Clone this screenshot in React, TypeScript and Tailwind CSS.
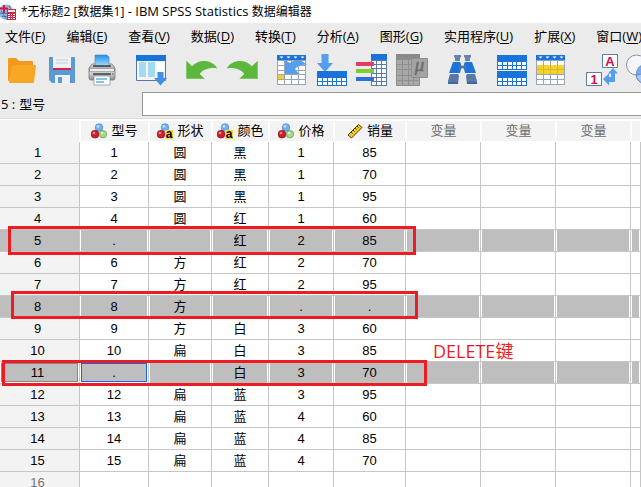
import type { ReactNode } from "react";

const BLUE = "#1a73d9";
const SKY = "#559eee";

function Icon({ children }: { children: ReactNode }) {
  return (
    <svg viewBox="0 0 32 32" className="block size-8" aria-hidden="true">
      {children}
    </svg>
  );
}

type GridProps = {
  x: number;
  y: number;
  w: number;
  h: number;
  head: number;
  cols: number;
  rows: number;
  line: string;
  headColor?: string;
  fill?: string;
};

function Sheet({ x, y, w, h, head, cols, rows, line, headColor = BLUE, fill = "#fff" }: GridProps) {
  const cw = (w - 1) / cols;
  const rh = (h - head - 1) / rows;
  return (
    <g shapeRendering="crispEdges">
      <rect x={x} y={y} width={w} height={h} fill={fill} />
      {Array.from({ length: cols + 1 }, (_, i) => (
        <rect key={"c" + i} x={Math.round(x + i * cw)} y={y + head} width="1" height={h - head} fill={line} />
      ))}
      {Array.from({ length: rows + 1 }, (_, i) => (
        <rect key={"r" + i} x={x} y={Math.round(y + head + i * rh)} width={w} height="1" fill={line} />
      ))}
      <rect x={x} y={y} width={w} height={head} fill={headColor} />
    </g>
  );
}

function FilterMarks() {
  return <path d="M2.500 2.500h4l-2 2zM9.500 2.500h4l-2 2zM16.500 2.500h4l-2 2zM23.500 2.500h4l-2 2z" fill="#fff" />;
}

const OpenIcon = () => (
  <Icon>
    <path d="M2 5q0-1 1-1h7l3 3h13q1 0 1 1v4H8L3 27H2z" fill="#f3991d" />
    <path d="M7 11h22q1 0 1 1l-2 16q0 1-1 1H4q-1 0-1-1l3-16q0-1 1-1z" fill="#f8a725" />
  </Icon>
);

const SaveIcon = () => (
  <Icon>
    <path d="M3 3h26v26H6l-3-3z" fill="#5b9ad2" />
    <path d="M7 3h18v12H7z" fill="#eef1f4" />
    <path d="M10 6h12M10 9h12" stroke="#c3ccd6" />
    <path d="M7 14h18v2H7z" fill="#d32348" />
    <path d="M9 21h15v8H9z" fill="#eef1f4" />
    <path d="M12 23h4v6h-4z" fill="#5b9ad2" />
  </Icon>
);

const PrintIcon = () => (
  <Icon>
    <defs>
      <linearGradient id="sheet" x1="0" y1="0" x2="0" y2="1">
        <stop offset="0" stopColor="#2490e6" />
        <stop offset="1" stopColor="#a6dcfb" />
      </linearGradient>
      <linearGradient id="body" x1="0" y1="0" x2="0" y2="1">
        <stop offset="0" stopColor="#e4e4e4" />
        <stop offset="0.400" stopColor="#8b8b8b" />
        <stop offset="0.550" stopColor="#d8d8d8" />
        <stop offset="1" stopColor="#8a8a8a" />
      </linearGradient>
    </defs>
    <path d="M6 10h20l3 4v10q0 2-2 2H5q-2 0-2-2V14z" fill="url(#body)" stroke="#777" strokeWidth="0.800" />
    <path d="M9 1h12l2 2v9H9z" fill="url(#sheet)" stroke="#3d86c0" strokeWidth="0.600" />
    <path d="M7 12h18M7 20h18" stroke="#3e3e3e" strokeWidth="1.500" />
    <path d="M4 15h24v2H4z" fill="#efefef" />
    <path d="M8 22h16v9H8z" fill="#fff" stroke="#7a8ba0" strokeWidth="0.700" />
    <path d="M10 24h11v2H10zM10 27h8v2h-8z" fill="#8cc0e8" />
    <circle cx="27" cy="20" r="1" fill="#4cb53a" />
  </Icon>
);

const RecallIcon = () => (
  <Icon>
    <path d="M0.500 1.500h29v25h-29z" fill="#f5f5f5" stroke="#56779f" />
    <path d="M0 1h30v6H0z" fill={BLUE} />
    <path d="M3 8h7v15H3zM12 8h7v15h-7z" fill="#a1daf2" />
    <path d="M21 8h7v10h-7z" fill="#fff" />
    <path d="M21.500 18h6v6h3.500l-6.500 7.500-6.500-7.500h3.500z" fill="#438ee6" />
  </Icon>
);

const UNDO_PATH = "M0.300 6.700v18h18.400l-5-4.700C16.500 16 23 13 31.300 14.500C26.500 5.500 13 4.500 6 12.300z";

const UndoIcon = () => (
  <Icon>
    <path d={UNDO_PATH} fill="#5cb83c" />
  </Icon>
);

const RedoIcon = () => (
  <Icon>
    <path d={UNDO_PATH} fill="#5cb83c" transform="matrix(-1 0 0 1 32 0)" />
  </Icon>
);

const GotoCaseIcon = () => (
  <Icon>
    <g transform="translate(1 0)">
      <Sheet x={0} y={1} w={29} h={30} head={5} cols={4} rows={5} line="#98a4b8" />
      <FilterMarks />
      <path d="M1 21h6v4H1z" fill="#f3cd2c" />
      <path d="M8 6v14h14l-4-5c3-4 8-5 12-4C25 5 18 5 13 9z" fill={SKY} />
    </g>
  </Icon>
);

const InsertCasesIcon = () => (
  <Icon>
    <path d="M5.500 0h7v9H17l-8 9-8-9h4.500z" fill={SKY} />
    <Sheet x={1} y={17} w={30} h={15} head={6} cols={6} rows={2} line={BLUE} />
  </Icon>
);

const InsertVariableIcon = () => (
  <Icon>
    <Sheet x={15} y={0} w={16} h={32} head={6} cols={3} rows={6} line="#5a7aa8" />
    <path d="M0 8h18v4H0z" fill="#e03c66" />
    <path d="M0 15h18v4H0z" fill="#7ccc32" />
    <path d="M0 23h18v4H0z" fill="#2c6fdc" />
  </Icon>
);

const StatisticsIcon = () => (
  <Icon>
    <Sheet x={0} y={0} w={24} h={32} head={5} cols={4} rows={5} line="#8e8e8e" headColor="#8a8a8a" fill="#a8a8a8" />
    <path d="M15.500 4.500h16v19h-16z" fill="#a4a4a4" stroke="#8e8e8e" />
    <text x="23.500" y="17" textAnchor="middle" fontSize="19" fontStyle="italic" fontFamily="Liberation Serif, serif" fill="#6c6c6c" stroke="#6c6c6c" strokeWidth="0.500">
      μ
    </text>
  </Icon>
);

const FindIcon = () => (
  <Icon>
    <path d="M8 1h7v2l-1 1v3H9V4L8 3zM18 1h7v2l-1 1v3h-5V4l-1-1z" fill="#6685ae" />
    <path d="M7 8h7l1 2v5l-1 4H3z" fill={BLUE} />
    <path d="M19 8h7l4 11H19l-1-4v-5z" fill={BLUE} />
    <path d="M13 10l3.500 2L20 10v6l-3.500-2L13 16z" fill="#5373a3" />
    <path d="M4 20h8l1 2-1 8H2v-3zM21 20h8l2 7v3H21l-1-8z" fill="#5878a7" />
    <path d="M2 28h10v2H2zM21 28h10v2H21z" fill="#3f679f" />
  </Icon>
);

const SplitIcon = () => (
  <Icon>
    <Sheet x={1} y={1} w={30} h={15} head={6} cols={6} rows={2} line={BLUE} />
    <Sheet x={1} y={17} w={30} h={15} head={6} cols={6} rows={2} line={BLUE} />
  </Icon>
);

const SelectCasesIcon = () => (
  <Icon>
    <Sheet x={0} y={1} w={29} h={30} head={5} cols={4} rows={5} line="#98a4b8" />
    <FilterMarks />
    <path d="M1 11h27v9H1z" fill="#f5d32e" />
    <path d="M1 15.500h27M7.500 11v9M14.500 11v9M21.500 11v9" stroke="#d9b52a" />
  </Icon>
);

const ValueLabelsIcon = () => (
  <Icon>
    <path d="M16.500 0.500h15v13h-15zM0.500 18.500h15v13h-15z" fill="#fff" stroke="#5b7ba8" />
    <g fontFamily="Liberation Sans, sans-serif" fontWeight="700" fontSize="13" fill="#d9094f" textAnchor="middle">
      <text x="24" y="11.500">A</text>
      <text x="8" y="29.500">1</text>
    </g>
    <path d="M17 25l6-5.500V23h2v-3.500h-3l5-5.500 5 5.500h-3V28h-6v3.500z" fill={SKY} />
  </Icon>
);

const VariableSetsIcon = () => (
  <Icon>
    <circle cx="20" cy="20" r="10" fill="#a9c8f5" stroke="#5a7fbb" />
    <circle cx="10.500" cy="11" r="10" fill="#f4f6fa" stroke="#8493aa" />
    <path d="M10.200 20.900A10 10 0 0 1 20.400 10A10 10 0 0 1 10.200 20.900z" fill="#7aa8ef" stroke="#5a7fbb" strokeWidth="0.600" />
  </Icon>
);

function AppLogo() {
  return (
    <svg viewBox="0 0 16 16" className="block size-4 shrink-0" aria-hidden="true">
      <circle cx="6" cy="8" r="7.500" fill="#8cb6dd" />
      <path d="M0 9.500h13M9 1q4 7 0 14M2 12.500h9M1 7q5 7 6 9" stroke="#3c6fae" strokeWidth="0.800" fill="none" />
      <path d="M0 3.500h3V1h2v2.500h3v2H5V9H3V5.500H0z" fill="#d9143d" />
      <rect x="7" y="5" width="9" height="11" fill="#c62c48" />
      <path d="M8 6h7v2H8z" fill="#f5dfe3" />
      <path d="M8 10h2v1H8zM11 10h1v1h-1zM13 10h2v1h-2zM8 12h2v1H8zM11 12h1v1h-1zM13 12h2v1h-2zM8 14h2v1H8zM11 14h1v1h-1zM13 14h2v1h-2z" fill="#fff" />
    </svg>
  );
}

function NominalIcon({ text = false }: { text?: boolean }) {
  return (
    <svg viewBox="0 0 16 16" className="block size-4 shrink-0" aria-hidden="true">
      <circle cx="8" cy="4.500" r="3.800" fill="#6fb0f0" stroke="#3f7cc0" strokeWidth="0.600" />
      <circle cx="7" cy="3.300" r="1.400" fill="#c4e0fb" />
      <circle cx="4" cy="11.200" r="3.900" fill="#cf1f2c" stroke="#8a0e18" strokeWidth="0.600" />
      <circle cx="3" cy="10" r="1.300" fill="#f08a8f" />
      {text ? (
        <>
          <rect x="8" y="7" width="8" height="9" fill="#ffd52e" />
          <text x="12" y="14.500" textAnchor="middle" fontSize="12" fontWeight="700" fontFamily="Liberation Sans, sans-serif" fill="#000">
            a
          </text>
        </>
      ) : (
        <>
          <circle cx="12" cy="11.200" r="3.700" fill="#a5d88a" stroke="#4f8f3c" strokeWidth="0.600" />
          <circle cx="11" cy="10" r="1.300" fill="#dcf3cf" />
        </>
      )}
    </svg>
  );
}

function ScaleIcon() {
  return (
    <svg viewBox="0 0 16 16" className="block size-4 shrink-0" aria-hidden="true">
      <path d="M1 12L11.500 1.500l3.500 3L4.500 15z" fill="#f6c52c" stroke="#4c3c10" />
      <path d="M4 9l1.500 1.500M6 7l1.500 1.500M8 5l1.500 1.500M10 3l1.500 1.500" stroke="#4c3c10" />
    </svg>
  );
}

const menus: [string, string][] = [
  ["文件", "F"],
  ["编辑", "E"],
  ["查看", "V"],
  ["数据", "D"],
  ["转换", "T"],
  ["分析", "A"],
  ["图形", "G"],
  ["实用程序", "U"],
  ["扩展", "X"],
  ["窗口", "W"],
];

const toolGroups: [string, () => ReactNode][][] = [
  [["打开", OpenIcon], ["保存", SaveIcon], ["打印", PrintIcon]],
  [["重新调用对话框", RecallIcon]],
  [["撤销", UndoIcon], ["重做", RedoIcon]],
  [["转到个案", GotoCaseIcon], ["插入个案", InsertCasesIcon], ["插入变量", InsertVariableIcon], ["统计", StatisticsIcon]],
  [["查找", FindIcon]],
  [["拆分文件", SplitIcon], ["选择个案", SelectCasesIcon]],
  [["值标签", ValueLabelsIcon], ["变量集", VariableSetsIcon]],
];

const columns: { name: string; icon?: ReactNode; width: string }[] = [
  { name: "型号", icon: <NominalIcon />, width: "w-[69px]" },
  { name: "形状", icon: <NominalIcon text />, width: "w-[63px]" },
  { name: "颜色", icon: <NominalIcon text />, width: "w-[57px]" },
  { name: "价格", icon: <NominalIcon />, width: "w-[65px]" },
  { name: "销量", icon: <ScaleIcon />, width: "w-[72px]" },
  { name: "变量", width: "w-[75px]" },
  { name: "变量", width: "w-[75px]" },
  { name: "变量", width: "w-[75px]" },
  { name: "", width: "w-auto" },
];

const rows: string[][] = [
  ["1", "圆", "黑", "1", "85"],
  ["2", "圆", "黑", "1", "70"],
  ["3", "圆", "黑", "1", "95"],
  ["4", "圆", "红", "1", "60"],
  [".", "", "红", "2", "85"],
  ["6", "方", "红", "2", "70"],
  ["7", "方", "红", "2", "95"],
  ["8", "方", "", ".", "."],
  ["9", "方", "白", "3", "60"],
  ["10", "扁", "白", "3", "85"],
  [".", "", "白", "3", "70"],
  ["12", "扁", "蓝", "3", "95"],
  ["13", "扁", "蓝", "4", "60"],
  ["14", "扁", "蓝", "4", "85"],
  ["15", "扁", "蓝", "4", "70"],
  [],
];

const selectedRows = [5, 8, 11];
const activeRow = 11;

function cellStyle(row: number, col: number) {
  if (row === activeRow && col === 0) {
    return "bg-[#bebebe] shadow-[inset_0_0_0_1px_#fff,inset_0_0_0_2px_#1565e8]";
  }
  if (selectedRows.includes(row)) {
    return "bg-[#bebebe] shadow-[inset_1px_0_0_#fff,inset_-1px_0_0_#fff]";
  }
  return "bg-white";
}

function rowHeadStyle(row: number) {
  if (row === activeRow) return "bg-[#bebebe] text-black shadow-[inset_0_0_0_1px_#fff,inset_0_0_0_2px_#858585]";
  if (selectedRows.includes(row)) return "bg-[#bebebe] text-black";
  return row > 15 ? "bg-[#f3f3f3] text-[#777]" : "bg-[#f3f3f3] text-black";
}

export default function App() {
  return (
    <div className="flex h-screen flex-col overflow-hidden bg-[#ebebeb] font-['Open_Sans','Noto_Sans_CJK_SC',sans-serif] text-black">
      <header className="flex h-[23px] shrink-0 items-center gap-[5px] bg-white">
        <AppLogo />
        <h1 className="text-[12px] leading-4 whitespace-nowrap">
          *无标题2 [数据集1]<span className="text-[13px]"> - IBM SPSS Statistics </span>数据编辑器
        </h1>
      </header>

      <nav className="flex h-[27px] shrink-0 items-center gap-[21px] pb-[2px] pl-[5px]">
        {menus.map(([label, key]) => (
          <button key={key} type="button" className="shrink-0 text-[13px] leading-5 whitespace-nowrap">
            {label}(<span className="underline underline-offset-2">{key}</span>)
          </button>
        ))}
      </nav>

      <div className="flex h-10 shrink-0 items-center gap-[18px] pl-[6px]" role="toolbar">
        {toolGroups.map((group, i) => (
          <div key={i} className="flex shrink-0 gap-2">
            {group.map(([label, Glyph]) => (
              <button key={label} type="button" aria-label={label}>
                <Glyph />
              </button>
            ))}
          </div>
        ))}
      </div>

      <div className="flex shrink-0 items-center border-b border-[#dadada] py-[2px]">
        <label htmlFor="cell-value" className="flex w-[142px] shrink-0 gap-1 pl-px text-[13px] leading-4">
          <span>5 :</span>
          <span>型号</span>
        </label>
        <input id="cell-value" type="text" className="h-6 min-w-0 flex-1 border border-r-0 border-[#999] bg-white px-1 text-[12px] outline-none" />
      </div>

      <main className="relative flex-1 overflow-hidden bg-white">
        <table className="w-full table-fixed border-separate border-spacing-0 font-['Liberation_Sans','Noto_Sans_CJK_SC',sans-serif] text-[13px] leading-4">
          <colgroup>
            <col className="w-[80px]" />
            {columns.map((c, i) => (
              <col key={i} className={c.width} />
            ))}
          </colgroup>
          <thead>
            <tr className="h-[23px]">
              <td className="border-t border-r border-t-white border-r-white bg-[#f3f3f3] p-0" />
              {columns.map((c, i) => (
                <th key={i} className="overflow-hidden border-t-2 border-r border-b border-l border-white bg-[#f3f3f3] p-0 font-normal">
                  <span className={"flex items-center justify-center gap-1 " + (c.icon ? "text-black" : "text-[#6b6b6b]")}>
                    {c.icon}
                    {c.name}
                  </span>
                </th>
              ))}
            </tr>
          </thead>
          <tbody>
            {rows.map((cells, r) => (
              <tr key={r} className="h-[22px]">
                <th className={"border-r border-b border-[#c6c6c6] py-0 pr-1 pl-0 text-center font-normal " + rowHeadStyle(r + 1)}>{r + 1}</th>
                {columns.map((_, c) => (
                  <td key={c} className={"border-r border-b border-[#c6c6c6] p-0 text-center " + cellStyle(r + 1, c)}>
                    {cells[c]}
                  </td>
                ))}
              </tr>
            ))}
          </tbody>
        </table>

        <div className="absolute top-[107px] left-[8px] h-[29px] w-[408px] border-3 border-[#ed1c24]" />
        <div className="absolute top-[172px] left-[11px] h-[28px] w-[407px] border-3 border-[#ed1c24]" />
        <div className="absolute top-[241px] left-[2px] h-[26px] w-[425px] border-3 border-[#ed1c24]" />
        <p className="absolute top-[220px] left-[433px] text-[18px] leading-6 whitespace-nowrap text-[#ed1c24]">DELETE键</p>
      </main>
    </div>
  );
}
